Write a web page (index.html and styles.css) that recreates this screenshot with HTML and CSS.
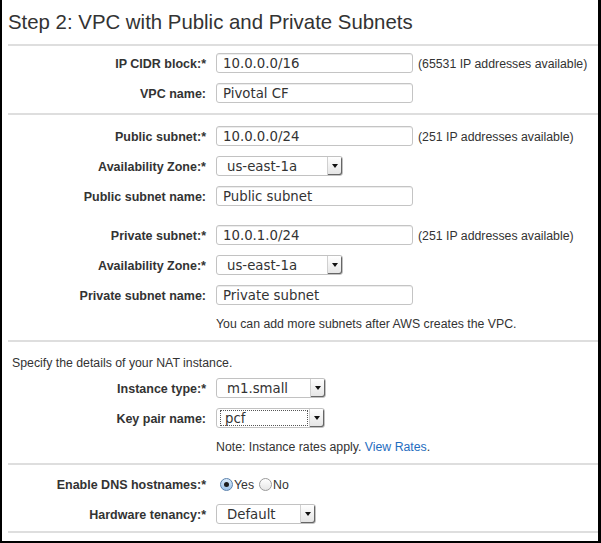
FILE: index.html
```html
<!DOCTYPE html>
<html>
<head>
<meta charset="utf-8">
<link rel="stylesheet" href="styles.css">
</head>
<body>
<div class="frame">
  <h1 class="title">Step 2: VPC with Public and Private Subnets</h1>
  <div class="sep"></div>

  <section class="sec sec1">
    <div class="row">
      <div class="lbl">IP CIDR block:*</div>
      <div class="field"><span class="input">10.0.0.0/16</span><span class="hint">(65531 IP addresses available)</span></div>
    </div>
    <div class="row">
      <div class="lbl">VPC name:</div>
      <div class="field"><span class="input">Pivotal CF</span></div>
    </div>
  </section>
  <div class="sep"></div>

  <section class="sec sec2">
    <div class="row">
      <div class="lbl">Public subnet:*</div>
      <div class="field"><span class="input">10.0.0.0/24</span><span class="hint">(251 IP addresses available)</span></div>
    </div>
    <div class="row">
      <div class="lbl">Availability Zone:*</div>
      <div class="field"><span class="select w127"><span class="val">us-east-1a</span><span class="btn"></span></span></div>
    </div>
    <div class="row">
      <div class="lbl">Public subnet name:</div>
      <div class="field"><span class="input">Public subnet</span></div>
    </div>
    <div class="spacer"></div>
    <div class="row">
      <div class="lbl">Private subnet:*</div>
      <div class="field"><span class="input">10.0.1.0/24</span><span class="hint">(251 IP addresses available)</span></div>
    </div>
    <div class="row">
      <div class="lbl">Availability Zone:*</div>
      <div class="field"><span class="select w127"><span class="val">us-east-1a</span><span class="btn"></span></span></div>
    </div>
    <div class="row">
      <div class="lbl">Private subnet name:</div>
      <div class="field"><span class="input">Private subnet</span></div>
    </div>
    <div class="note">You can add more subnets after AWS creates the VPC.</div>
  </section>
  <div class="sep"></div>

  <section class="sec sec3">
    <div class="intro">Specify the details of your NAT instance.</div>
    <div class="row">
      <div class="lbl">Instance type:*</div>
      <div class="field"><span class="select w110"><span class="val">m1.small</span><span class="btn"></span></span></div>
    </div>
    <div class="row">
      <div class="lbl">Key pair name:</div>
      <div class="field"><span class="select w109 focus"><span class="val"><span class="dot">pcf</span></span><span class="btn"></span></span></div>
    </div>
    <div class="note">Note: Instance rates apply. <a class="link">View Rates</a>.</div>
  </section>
  <div class="sep"></div>

  <section class="sec sec4">
    <div class="row">
      <div class="lbl">Enable DNS hostnames:*</div>
      <div class="field">
        <span class="radio on"></span><span class="rtxt">Yes</span>
        <span class="radio"></span><span class="rtxt">No</span>
      </div>
    </div>
    <div class="row r29">
      <div class="lbl">Hardware tenancy:*</div>
      <div class="field"><span class="select w100"><span class="val">Default</span><span class="btn"></span></span></div>
    </div>
  </section>
  <div class="sep"></div>
</div>
</body>
</html>
```

FILE: styles.css
```css
html, body {
  margin: 0;
  padding: 0;
  background: #fff;
}
.frame {
  width: 601px;
  height: 543px;
  box-sizing: border-box;
  border-left: 2px solid #000;
  border-right: 3px solid #000;
  border-bottom: 2px solid #000;
  overflow: hidden;
  font-family: "Liberation Sans", Arial, sans-serif;
  color: #333;
}
.title {
  margin: 0;
  height: 44px;
  line-height: 44px;
  padding-left: 6px;
  font-size: 20.4px;
  font-weight: normal;
  color: #333;
}
.sep {
  height: 2px;
  margin-left: 6px;
  background: #dedede;
}
.sec1 { padding: 2px 0 5px; }
.sec2 { padding: 6px 0 4px; }
.sec3 { padding: 11px 0 4px; }
.sec4 { padding: 4px 0 3px; }
.row {
  display: flex;
  align-items: center;
  height: 30px;
}
.row.r29 { height: 29px; }
.spacer { height: 9px; }
.lbl {
  width: 204px;
  text-align: right;
  font-weight: bold;
  font-size: 12.5px;
  color: #333;
  flex: none;
  padding-top: 2px;
}
.field {
  margin-left: 10px;
  display: flex;
  align-items: center;
}
.input {
  box-sizing: border-box;
  width: 197px;
  height: 20px;
  border: 1px solid #c4c4c4;
  border-radius: 3px;
  padding: 1px 0 0 6px;
  font-family: "DejaVu Sans", sans-serif;
  font-size: 13.3px;
  line-height: 17px;
  color: #333;
  background: #fff;
  box-shadow: inset 0 1px 0 #ececec;
}
.hint {
  margin-left: 5px;
  font-size: 12.3px;
  color: #333;
  padding-top: 2px;
}
.select {
  box-sizing: border-box;
  height: 20px;
  display: flex;
  border: 1px solid #c2c2c2;
  border-radius: 3px;
  background: #fff;
}
.w127 { width: 127px; }
.w110 { width: 110px; }
.w109 { width: 109px; }
.w100 { width: 100px; }
.val {
  flex: 1;
  padding: 1px 0 0 10px;
  font-family: "DejaVu Sans", sans-serif;
  font-size: 13.3px;
  line-height: 17px;
  color: #333;
}
.focus .val {
  padding: 1px 0 1px 3px;
}
.dot {
  display: block;
  height: 14px;
  line-height: 15px;
  border: 1px dotted #555;
  padding-left: 4px;
  margin-right: 1px;
}
.btn {
  width: 14px;
  flex: none;
  border-left: 1px solid #d0d0d0;
  border-radius: 0 2px 2px 0;
  background: linear-gradient(#ffffff, #e4e4e4);
  box-shadow: inset -1px -1px 0 #666;
  display: flex;
  align-items: center;
  justify-content: center;
}
.btn::after {
  content: "";
  width: 0;
  height: 0;
  border-left: 3px solid transparent;
  border-right: 3px solid transparent;
  border-top: 4px solid #111;
  margin-right: 1px;
}
.note {
  height: 26px;
  line-height: 28px;
  padding-left: 214px;
  font-size: 12.3px;
  color: #333;
}
.intro {
  height: 20px;
  line-height: 20px;
  padding-left: 10px;
  font-size: 12.3px;
  color: #333;
}
.link {
  color: #1f6dc0;
}
.radio {
  box-sizing: border-box;
  width: 13px;
  height: 13px;
  border-radius: 50%;
  border: 1px solid #9a9a9a;
  background: linear-gradient(#ffffff, #e6e6e6);
  display: flex;
  align-items: center;
  justify-content: center;
}
.radio.on {
  margin-left: 4px;
  border-color: #5b82ad;
  background: linear-gradient(#d9eafa, #9cc3ea);
}
.radio.on::after {
  content: "";
  width: 5px;
  height: 5px;
  border-radius: 50%;
  background: #1c1c1c;
}
.rtxt {
  margin-left: 1px;
  margin-right: 5px;
  font-size: 12.3px;
  color: #333;
  padding-top: 2px;
}
```
